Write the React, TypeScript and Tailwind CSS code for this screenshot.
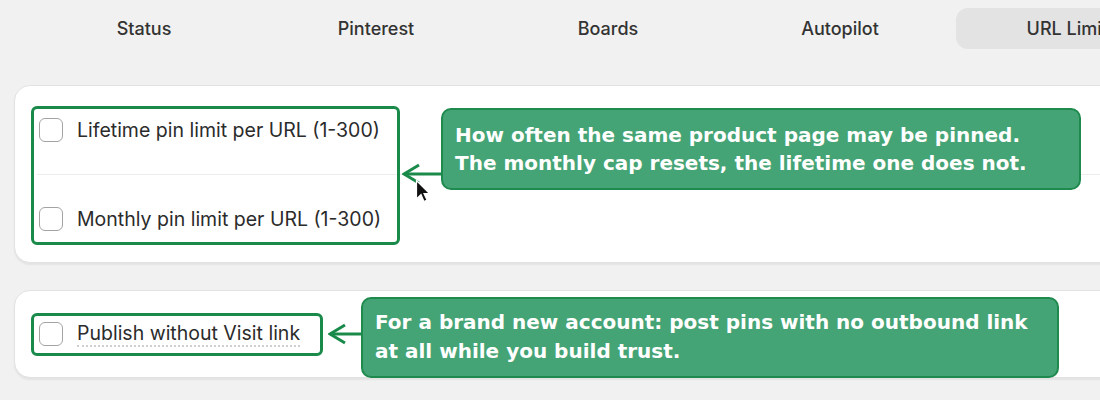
import React from 'react'

const tabs = ['Status', 'Pinterest', 'Boards', 'Autopilot', 'URL Limits']

function Checkbox() {
  return <span className="block w-[24px] h-[24px] shrink-0 rounded-[6px] border-[1.5px] border-[#a3a3a3] bg-white" />
}

function Row({ label, underline = false }: { label: string; underline?: boolean }) {
  return (
    <div className="flex items-center gap-[14px] pl-[24px] h-full">
      <Checkbox />
      <span
        className={
          underline
            ? 'text-[19.5px] leading-[24px] text-[#2b2b2b] border-b-[2px] border-dotted border-[#cfcfcf]'
            : 'text-[19.5px] leading-[24px] text-[#2b2b2b]'
        }
      >
        {label}
      </span>
    </div>
  )
}

function ArrowLeft({ x, y, len }: { x: number; y: number; len: number }) {
  return (
    <svg
      className="absolute"
      style={{ left: x, top: y - 12 }}
      width={len}
      height={24}
      viewBox={`0 0 ${len} 24`}
    >
      <path d={`M2 12 H${len}`} stroke="#1a8a4a" strokeWidth="3" fill="none" />
      <path d="M17 3 L2 12 L17 21" stroke="#1a8a4a" strokeWidth="3" fill="none" strokeLinejoin="miter" />
    </svg>
  )
}

function Callout({ children, className }: { children: React.ReactNode; className: string }) {
  return (
    <div
      className={
        'absolute rounded-[10px] border-2 border-[#1e8a4e] bg-[#45a475] px-[12px] text-white font-bold text-[20px] whitespace-nowrap font-["DejaVu_Sans",sans-serif] ' +
        className
      }
    >
      {children}
    </div>
  )
}

export default function App() {
  return (
    <div className="relative w-[1100px] h-[400px] overflow-hidden bg-[#f1f1f1] font-['Inter','Liberation_Sans',sans-serif]">
      {/* Tabs */}
      <div className="flex pl-[28px] pt-[8px] w-[1300px]">
        {tabs.map((t, i) => (
          <div
            key={t}
            className={
              i === 4
                ? 'w-[232px] h-[41px] shrink-0 flex items-center justify-center rounded-[12px] bg-[#e3e3e3] text-[18px] font-medium text-[#333]'
                : 'w-[232px] h-[41px] shrink-0 flex items-center justify-center text-[18px] font-medium text-[#333]'
            }
          >
            {t}
          </div>
        ))}
      </div>

      {/* Card 1 */}
      <div className="ml-[14px] mt-[36px] w-[1120px] h-[178px] rounded-[16px] bg-white border border-[#e2e2e2] shadow-[0_2px_2px_rgba(0,0,0,0.06)] flex flex-col">
        <div className="h-[88px]">
          <Row label="Lifetime pin limit per URL (1-300)" />
        </div>
        <div className="ml-[22px] h-px bg-[#ececec]" />
        <div className="flex-1">
          <Row label="Monthly pin limit per URL (1-300)" />
        </div>
      </div>

      {/* Card 2 */}
      <div className="ml-[14px] mt-[27px] w-[1120px] h-[88px] rounded-[16px] bg-white border border-[#e2e2e2] shadow-[0_2px_2px_rgba(0,0,0,0.06)]">
        <Row label="Publish without Visit link" underline />
      </div>

      {/* Annotations */}
      <div className="absolute left-[31px] top-[106px] w-[369px] h-[139px] rounded-[6px] border-[3px] border-[#1a8a4a]" />
      <div className="absolute left-[31px] top-[313px] w-[292px] h-[43px] rounded-[6px] border-[3px] border-[#1a8a4a]" />

      <ArrowLeft x={402} y={174} len={39} />
      <ArrowLeft x={328} y={334} len={33} />

      {/* cursor */}
      <svg className="absolute left-[415px] top-[179px]" width="16" height="26" viewBox="0 0 16 26">
        <path d="M1.5 1.5 L1.5 20 L6 15.5 L9 22.5 L12 21 L9 14.5 L14.5 14.5 Z" fill="#111" stroke="#fff" strokeWidth="1.2" />
      </svg>

      <Callout className="left-[441px] top-[108px] w-[640px] h-[82px] pt-[11px] leading-[28px]">
        <div>How often the same product page may be pinned.</div>
        <div>The monthly cap resets, the lifetime one does not.</div>
      </Callout>

      <Callout className="left-[361px] top-[297px] w-[698px] h-[81px] pt-[9px] leading-[29px]">
        <div>For a brand new account: post pins with no outbound link</div>
        <div>at all while you build trust.</div>
      </Callout>
    </div>
  )
}
